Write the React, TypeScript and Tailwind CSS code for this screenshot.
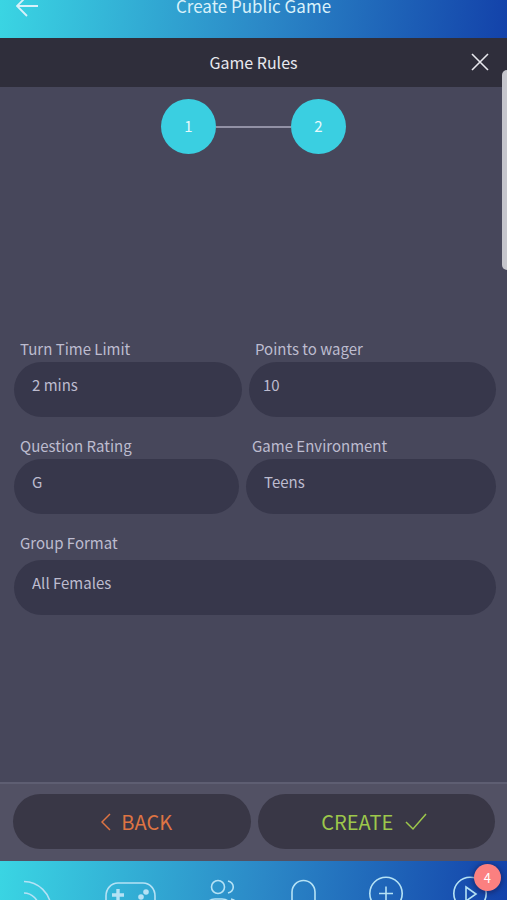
import React from 'react';

interface FieldProps {
  id: string;
  label: string;
  children: React.ReactNode;
  labelClassName?: string;
}

const fieldClass =
  'block w-full h-[55px] rounded-full border-0 bg-[#37374b] pr-6 text-[15px] text-[#bdbccf] appearance-none outline-none';

const Field: React.FC<FieldProps> = ({ id, label, children, labelClassName = '' }) => {
  return (
    <div className="min-w-0">
      <label
        htmlFor={id}
        className={`block pl-1.5 text-[15px] leading-[22px] text-[#bdbccf] ${labelClassName}`}
      >
        {label}
      </label>
      {children}
    </div>
  );
};

const Step: React.FC<{ value: number }> = ({ value }) => (
  <li className="flex size-[55px] items-center justify-center rounded-full bg-[#3acfe1] text-[15px] text-[#e6f9fc]">
    {value}
  </li>
);

const iconProps = {
  height: 40,
  fill: 'none',
  stroke: 'currentColor',
  strokeWidth: 1.6,
  'aria-hidden': true,
};

const BottomNav = () => {
  return (
    <nav className="flex h-[39px] shrink-0 items-start justify-between overflow-hidden bg-linear-[95deg,#3ad5e3,#2b88c7_52%,#1342aa] pt-[15px] pr-5 pl-6 text-[#b5e2f5]">
      <button type="button" aria-label="Feed">
        <svg {...iconProps} width="28" viewBox="0 0 28 40">
          <path d="M0 5.500c14 0 27 12 27 27M0 17c8 0 15 7 15 15" />
          <circle cx="3" cy="30" r="3" />
        </svg>
      </button>
      <button type="button" aria-label="Games">
        <svg {...iconProps} width="54" viewBox="0 0 54 40">
          <path d="M16 7h25c7 0 12 6 12 13v9c0 6-6 7-9 3l-5-5H18l-5 5c-3 4-9 3-9-3v-9C4 13 9 7 16 7Z" />
          <path d="M16 13v12M10 19h12" strokeWidth="3.4" />
          <g fill="currentColor" stroke="none">
            <circle cx="44" cy="16" r="2.8" />
            <circle cx="39" cy="21" r="2.8" />
          </g>
        </svg>
      </button>
      <button type="button" aria-label="Friends">
        <svg {...iconProps} width="32" viewBox="0 0 32 40">
          <circle cx="12" cy="11" r="6.5" />
          <path d="M22 5c7 2 7 10 0 12M2 34v-5c0-4 3-6 7-6h7c4 0 7 2 7 6v5M25 23c4 1 6 3 6 6v5" />
        </svg>
      </button>
      <button type="button" aria-label="Notifications">
        <svg {...iconProps} width="30" viewBox="0 0 30 40">
          <path d="M3 28V16a11.5 11.5 0 0 1 23 0v12l3 4H0l3-4ZM11 35c1 3 6 3 7 0" />
        </svg>
      </button>
      <button type="button" aria-label="New game">
        <svg {...iconProps} width="34" viewBox="0 0 34 40">
          <circle cx="17" cy="17.500" r="16.2" />
          <path d="M17 10.500v14M10 17.500h14" />
        </svg>
      </button>
      <button type="button" aria-label="Play, 4 waiting" className="relative">
        <svg {...iconProps} width="34" viewBox="0 0 34 40">
          <circle cx="17" cy="17.500" r="16.2" />
          <path d="m13 11 10 7-10 7V11Z" />
        </svg>
        <span className="absolute -top-3 -right-3.5 flex size-[27px] items-center justify-center rounded-full bg-[#fb8080] text-[13px] text-white shadow-[0_1px_4px_2px_rgba(20,30,90,0.5)]">
          4
        </span>
      </button>
    </nav>
  );
};

const App = () => {
  return (
    <div className="relative flex h-screen flex-col overflow-hidden bg-[#47475b] font-['Noto_Sans_CJK_SC',sans-serif]">
      <header className="grid h-[38px] shrink-0 grid-cols-[1fr_auto_1fr] content-end items-center overflow-hidden bg-linear-[95deg,#3ad5e3,#2b88c7_52%,#1342aa] px-4 pb-5 text-[#d8f1fa]">
        <button type="button" aria-label="Go back" className="justify-self-start">
          <svg width="22" height="24" viewBox="0 0 22 24" fill="none" stroke="currentColor" strokeWidth="1.8" aria-hidden="true">
            <path d="M22 12H1M11 2 1 12l10 10" />
          </svg>
        </button>
        <h1 className="text-[17px] leading-6">Create Public Game</h1>
      </header>

      <div className="grid h-[49px] shrink-0 grid-cols-[1fr_auto_1fr] items-center bg-[#2f2e3b] px-[18px] pb-0.5 text-[#e8e8ee]">
        <h2 className="col-start-2 text-[16px] leading-6">Game Rules</h2>
        <button type="button" aria-label="Close" className="justify-self-end">
          <svg width="18" height="18" viewBox="0 0 18 18" fill="none" stroke="currentColor" strokeWidth="1.6" aria-hidden="true">
            <path d="m1 1 16 16M17 1 1 17" />
          </svg>
        </button>
      </div>

      <main className="flex-1 pt-3">
        <ol className="flex items-center justify-center">
          <Step value={1} />
          <li className="h-0.5 w-[75px] bg-[#9291a5]" aria-hidden="true" />
          <Step value={2} />
        </ol>

        <form id="rules" className="mt-46 flex flex-col gap-[18px] pr-[11px] pl-3.5">
          <div className="grid grid-cols-[228fr_247fr] gap-[7px]">
            <Field id="turn-time" label="Turn Time Limit" labelClassName="pb-0.5">
              <select id="turn-time" className={`${fieldClass} pb-2 pl-[18px]`}>
                <option>2 mins</option>
              </select>
            </Field>
            <Field id="points" label="Points to wager" labelClassName="pb-0.5">
              <input id="points" type="text" defaultValue="10" className={`${fieldClass} pb-2.5 pl-3.5`} />
            </Field>
          </div>
          <div className="grid grid-cols-[225fr_250fr] gap-[7px]">
            <Field id="rating" label="Question Rating" labelClassName="pb-0.5">
              <select id="rating" className={`${fieldClass} pb-2 pl-[18px]`}>
                <option>G</option>
              </select>
            </Field>
            <Field id="environment" label="Game Environment" labelClassName="pb-0.5">
              <select id="environment" className={`${fieldClass} pb-2 pl-[18px]`}>
                <option>Teens</option>
              </select>
            </Field>
          </div>
          <Field id="group-format" label="Group Format" labelClassName="pb-1.5">
            <select id="group-format" className={`${fieldClass} pb-2 pl-[18px]`}>
              <option>All Females</option>
            </select>
          </Field>
        </form>
      </main>

      <footer className="grid h-[79px] shrink-0 grid-cols-2 gap-[7px] border-t-2 border-[#5e5e72] bg-[#525164] pt-2.5 pr-3 pb-3 pl-[13px] text-[20px]">
        <button type="button" className="flex items-center justify-center gap-2.5 rounded-full bg-[#393746] pl-2.5 text-[#de7443]">
          <svg width="10" height="18" viewBox="0 0 10 18" fill="none" stroke="currentColor" strokeWidth="1.5" aria-hidden="true">
            <path d="M9 1 1 9l8 8" />
          </svg>
          BACK
        </button>
        <button type="submit" form="rules" className="flex items-center justify-center gap-3 rounded-full bg-[#393746] pr-1 text-[#9dc74b]">
          CREATE
          <svg width="22" height="18" viewBox="0 0 22 18" fill="none" stroke="currentColor" strokeWidth="1.5" aria-hidden="true">
            <path d="m1 9 7 7L21 1" />
          </svg>
        </button>
      </footer>

      <BottomNav />

      <div className="absolute top-[70px] right-0 h-[200px] w-[5px] rounded-l-full bg-[#c5c5cc]" aria-hidden="true" />
    </div>
  );
};

export default App;
